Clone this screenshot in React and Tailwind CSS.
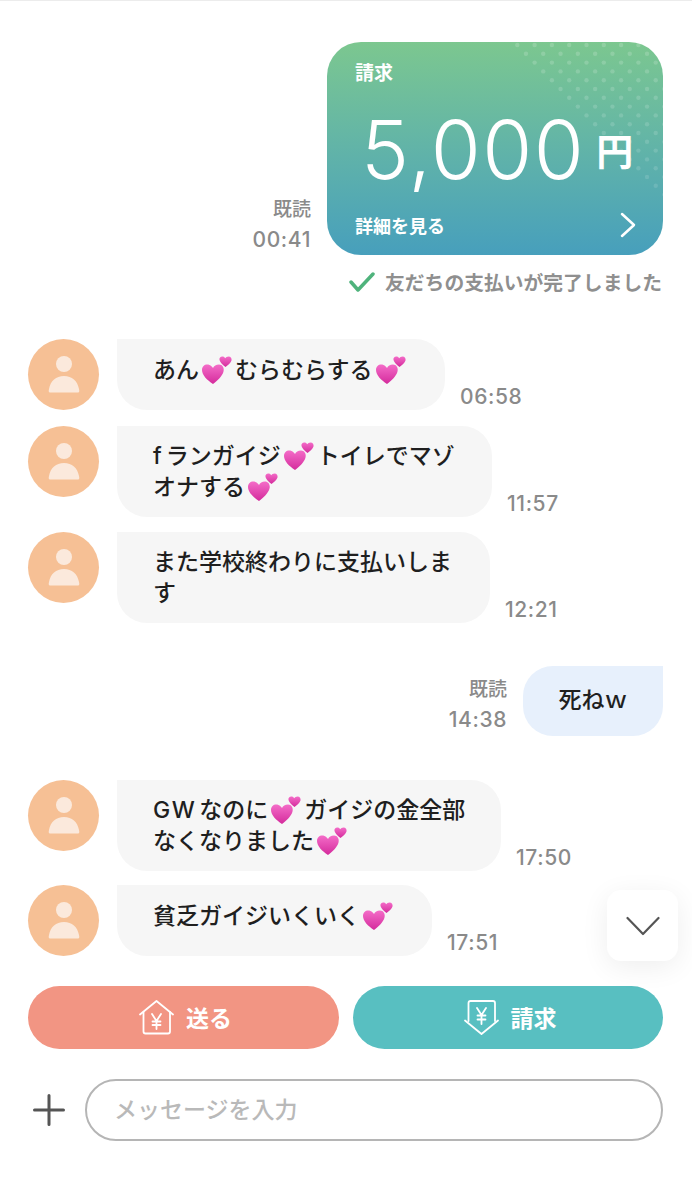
import React from "react";

const Heart = () => (
  <svg viewBox="0 0 32 30" className="inline-block w-[32px] h-[30px] mx-[2px] my-[-6px] align-[-1px]">
    <defs>
      <linearGradient id="hg" x1="0" y1="0" x2="0" y2="1">
        <stop offset="0" stopColor="#f46cc8" />
        <stop offset="1" stopColor="#d42b9c" />
      </linearGradient>
    </defs>
    <path d="M12 29 C6 25 1 20 1 15 C1 10.500 5 8.500 8.500 10 C10 10.700 11 11.700 12 13 C13 11 15 9.500 18 9.500 C21.500 9.500 23.500 13 22.500 16.500 C21.500 21 16.500 25.500 12 29 Z" fill="url(#hg)" />
    <path d="M24.500 12 C22 10 19 7.500 18.500 5 C18 2.500 20 1 22 1.500 C23 1.700 23.800 2.400 24.300 3.300 C25 2.300 26 1.500 27.500 1.500 C29.800 1.500 31 3.500 30.500 5.500 C29.800 8 27 10.300 24.500 12 Z" fill="url(#hg)" />
  </svg>
);

const Avatar = () => (
  <div className="w-[71px] h-[71px] shrink-0 rounded-full bg-[#f6c095] flex items-center justify-center">
    <svg viewBox="0 0 32 37" className="w-[32px] h-[37px]">
      <circle cx="16" cy="8" r="8" fill="#fbe9dc" />
      <path d="M2 36.500 C0.500 36.500 0.500 35 1 33 C2.500 25 8 20 16 20 C24 20 29.500 25 31 33 C31.500 35 31.500 36.500 30 36.500 Z" fill="#fbe9dc" />
    </svg>
  </div>
);

const Time = ({ children, className = "" }) => (
  <div className={`font-['Inter'] text-[21px] leading-[24px] font-medium text-[#8a8a8a] tracking-[0.6px] ${className}`}>{children}</div>
);

const Read = () => (
  <div className="text-[19px] leading-[24px] font-medium text-[#8a8a8a] mb-[8px]">既読</div>
);

const Incoming = ({ w, time, mt, single, children }) => (
  <div className={`flex items-start pl-[28px] ${mt}`}>
    <Avatar />
    <div className="ml-[18px] flex items-end">
      <div className={`${w} ${single ? "h-[71px] pb-[13px]" : "pt-[13px] pb-[16px]"} flex items-center bg-[#f6f6f6] rounded-[30px] rounded-tl-none pl-[36px] text-[23px] leading-[31px] font-medium text-[#1f1f1f] whitespace-nowrap`}>
        <div>{children}</div>
      </div>
      <Time className="ml-[15px] mb-[1px]">{time}</Time>
    </div>
  </div>
);

const dots = [];
for (let r = 0; r < 22; r++) {
  for (let c = 0; c < 21; c++) {
    const x = c * 17.300 + (r % 2 ? 8.650 : 0);
    const y = r * 8.800;
    const startX = y * 0.97 + 184;
    if (x >= startX) {
      dots.push(<circle key={`${r}-${c}`} cx={x} cy={y + 3} r="2.200" fill="#ffffff" fillOpacity={0.17 - r * 0.003} />);
    }
  }
}

export default function App() {
  return (
    <div className="relative w-[692px] h-[1200px] overflow-hidden bg-white font-['Noto_Sans_CJK_JP','Noto_Sans',sans-serif]">
      <div className="h-px bg-[#ececec]" />
      <div className="flex justify-end items-end pr-[29px] pt-[41px]">
        <div className="text-right mr-[16px] mb-[3px]">
          <Read />
          <Time>00:41</Time>
        </div>
        <div className="relative w-[336px] h-[213px] rounded-[34px] overflow-hidden bg-gradient-to-b from-[#7cc78f] to-[#479fbc] text-white">
          <svg className="absolute inset-0 w-full h-full">{dots}</svg>
          <div className="relative h-full flex flex-col pl-[28px] pr-[27px]">
            <div className="text-[19px] leading-[24px] font-bold mt-[18px]">請求</div>
            <div className="flex items-start mt-[21px] ml-[6px]">
              <span className="font-['Inter'] font-[350] text-[81px] leading-[90px] tracking-[1.500px]">5,000</span>
              <span className="text-[37px] leading-[40px] font-bold ml-[11px] mt-[25px]">円</span>
            </div>
            <div className="flex items-center justify-between mt-auto mb-[17px]">
              <span className="text-[18px] leading-[24px] font-bold">詳細を見る</span>
              <svg viewBox="0 0 16 26" className="w-[16px] h-[26px]" fill="none" stroke="#fff" strokeWidth="2.500" strokeLinecap="round" strokeLinejoin="round">
                <path d="M2 2 L14 13 L2 24" />
              </svg>
            </div>
          </div>
        </div>
      </div>
      <div className="flex justify-end items-center pr-[30px] mt-[12px] h-[30px]">
        <svg viewBox="0 0 26 20" className="w-[26px] h-[20px] mr-[10px]" fill="none" stroke="#4fb37c" strokeWidth="3.500" strokeLinecap="round" strokeLinejoin="round">
          <path d="M2 10 L9 18 L24 2" />
        </svg>
        <span className="text-[19.800px] leading-[30px] font-bold text-[#8f8f8f]">友だちの支払いが完了しました</span>
      </div>

      <Incoming w="w-[328px]" time="06:58" mt="mt-[42px]" single>
        あん<Heart />むらむらする<Heart />
      </Incoming>
      <Incoming w="w-[375px]" time="11:57" mt="mt-[16px]">
        <span className="font-['Inter'] leading-none mr-[4px]">f</span>ランガイジ<Heart />トイレでマゾ<br />オナする<Heart />
      </Incoming>
      <Incoming w="w-[373px]" time="12:21" mt="mt-[15px]">
        また学校終わりに支払いしま<br />す
      </Incoming>

      <div className="flex justify-end items-end pr-[29px] mt-[43px]">
        <div className="text-right mr-[16px] mb-[4px]">
          <Read />
          <Time>14:38</Time>
        </div>
        <div className="w-[140px] h-[70px] bg-[#e7f0fc] rounded-[30px] rounded-tr-none flex items-center justify-center pb-[6px] text-[23px] font-medium text-[#1f1f1f]">
          死ねｗ
        </div>
      </div>

      <Incoming w="w-[384px]" time="17:50" mt="mt-[44px]">
        <span className="font-['Inter'] leading-none tracking-[1.500px] mr-[3px]">GW</span>なのに<Heart />ガイジの金全部<br />なくなりました<Heart />
      </Incoming>
      <Incoming w="w-[315px]" time="17:51" mt="mt-[14px]" single>
        貧乏ガイジいくいく<Heart />
      </Incoming>

      <div className="absolute left-[607px] top-[890px] w-[71px] h-[71px] rounded-[14px] bg-white shadow-[0_6px_28px_rgba(0,0,0,0.07)] flex items-center justify-center">
        <svg viewBox="0 0 34 20" className="w-[34px] h-[20px]" fill="none" stroke="#555555" strokeWidth="2.200" strokeLinecap="round" strokeLinejoin="round">
          <path d="M1.500 2 L17 18 L32.500 2" />
        </svg>
      </div>

      <div className="flex gap-[14px] pl-[28px] pr-[29px] mt-[30px]">
        <div className="w-[311px] h-[63px] rounded-full bg-[#f29583] flex items-center justify-center gap-[12px] pl-[4px] text-white">
          <svg viewBox="0 0 35 35" className="w-[35px] h-[35px]" fill="none" stroke="#fff" strokeWidth="1.800" strokeLinecap="round" strokeLinejoin="round">
            <path d="M1 14.500 L17.500 1 L34 14.500" />
            <path d="M4.500 12 V31.500 Q4.500 33.500 6.500 33.500 H29 Q31 33.500 31 31.500 V12" />
            <path d="M13 14 L17.500 21 L22 14 M17.500 21 V29 M13.500 21.500 H21.500 M13.500 25 H21.500" />
          </svg>
          <span className="text-[23px] font-bold">送る</span>
        </div>
        <div className="w-[310px] h-[63px] rounded-full bg-[#58bfc1] flex items-center justify-center gap-[12px] pl-[4px] text-white">
          <svg viewBox="0 0 35 35" className="w-[35px] h-[35px]" fill="none" stroke="#fff" strokeWidth="1.800" strokeLinecap="round" strokeLinejoin="round">
            <path d="M4.500 21 V3 Q4.500 1 6.500 1 H29 Q31 1 31 3 V21" />
            <path d="M1 20.500 L17.500 34 L34 20.500" />
            <path d="M13 8 L17.500 15 L22 8 M17.500 15 V24 M13.500 15.500 H21.500 M13.500 19.500 H21.500" />
          </svg>
          <span className="text-[23px] font-bold">請求</span>
        </div>
      </div>

      <div className="flex items-center pl-[33px] pr-[29px] mt-[30px]">
        <svg viewBox="0 0 32 32" className="w-[32px] h-[32px] mr-[20px]" fill="none" stroke="#555555" strokeWidth="3" strokeLinecap="round">
          <path d="M16 1.500 V30.500 M1.500 16 H30.500" />
        </svg>
        <div className="flex-1 h-[62px] rounded-full border-2 border-[#b5b5b5] flex items-center pl-[27px] pb-[3px] text-[23px] font-medium text-[#b9b9b9]">
          メッセージを入力
        </div>
      </div>
    </div>
  );
}
